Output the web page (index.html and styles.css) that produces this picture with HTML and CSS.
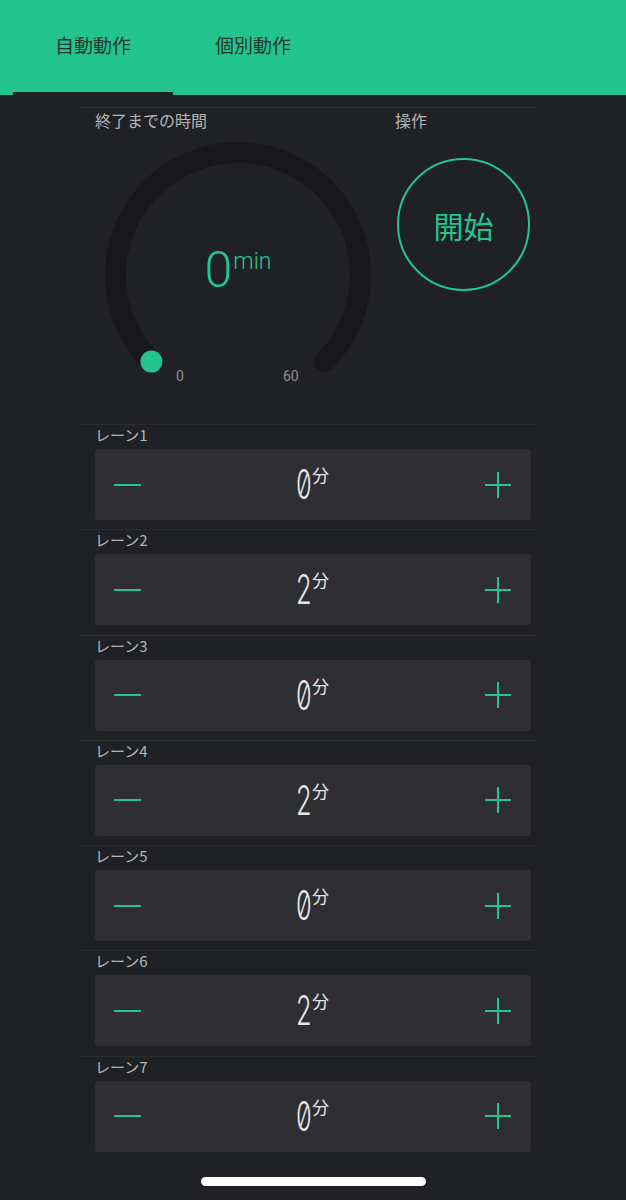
FILE: index.html
```html
<!DOCTYPE html>
<html lang="ja">
<head>
<meta charset="utf-8">
<link rel="stylesheet" href="styles.css">
</head>
<body>
<header class="header">
  <div class="tab active">自動動作</div>
  <div class="tab">個別動作</div>
</header>
<main class="main">
  <section class="section timer">
    <div class="left">
      <div class="label top-label">終了までの時間</div>
      <svg class="gauge" width="290" height="270" viewBox="0 0 290 270">
        <path d="M56.4 231.6 A122.5 122.5 0 1 1 229.6 231.6" fill="none" stroke="#18181b" stroke-width="21" stroke-linecap="round"/>
        <circle cx="56.4" cy="231.6" r="11" fill="#23c48e"/>
        <text x="81" y="251" class="tick">0</text>
        <text x="188" y="251" class="tick">60</text>
      </svg>
      <div class="readout"><span class="big">0</span><span class="min">min</span></div>
    </div>
    <div class="right">
      <div class="label top-label">操作</div>
      <div class="start">開始</div>
    </div>
  </section>

  <section class="section lane">
    <div class="label">レーン1</div>
    <div class="panel"><span class="minus"></span><div class="val"><span class="num">0</span><span class="unit">分</span></div><svg class="plus" width="26" height="26" viewBox="0 0 26 26"><path d="M13 0V26M0 13H26" stroke="#23c48e" stroke-width="2"/></svg></div>
  </section>
  <section class="section lane">
    <div class="label">レーン2</div>
    <div class="panel"><span class="minus"></span><div class="val"><span class="num">2</span><span class="unit">分</span></div><svg class="plus" width="26" height="26" viewBox="0 0 26 26"><path d="M13 0V26M0 13H26" stroke="#23c48e" stroke-width="2"/></svg></div>
  </section>
  <section class="section lane">
    <div class="label">レーン3</div>
    <div class="panel"><span class="minus"></span><div class="val"><span class="num">0</span><span class="unit">分</span></div><svg class="plus" width="26" height="26" viewBox="0 0 26 26"><path d="M13 0V26M0 13H26" stroke="#23c48e" stroke-width="2"/></svg></div>
  </section>
  <section class="section lane">
    <div class="label">レーン4</div>
    <div class="panel"><span class="minus"></span><div class="val"><span class="num">2</span><span class="unit">分</span></div><svg class="plus" width="26" height="26" viewBox="0 0 26 26"><path d="M13 0V26M0 13H26" stroke="#23c48e" stroke-width="2"/></svg></div>
  </section>
  <section class="section lane">
    <div class="label">レーン5</div>
    <div class="panel"><span class="minus"></span><div class="val"><span class="num">0</span><span class="unit">分</span></div><svg class="plus" width="26" height="26" viewBox="0 0 26 26"><path d="M13 0V26M0 13H26" stroke="#23c48e" stroke-width="2"/></svg></div>
  </section>
  <section class="section lane">
    <div class="label">レーン6</div>
    <div class="panel"><span class="minus"></span><div class="val"><span class="num">2</span><span class="unit">分</span></div><svg class="plus" width="26" height="26" viewBox="0 0 26 26"><path d="M13 0V26M0 13H26" stroke="#23c48e" stroke-width="2"/></svg></div>
  </section>
  <section class="section lane">
    <div class="label">レーン7</div>
    <div class="panel"><span class="minus"></span><div class="val"><span class="num">0</span><span class="unit">分</span></div><svg class="plus" width="26" height="26" viewBox="0 0 26 26"><path d="M13 0V26M0 13H26" stroke="#23c48e" stroke-width="2"/></svg></div>
  </section>
</main>
<div class="home"></div>
</body>
</html>
```
FILE: styles.css
```css
* { box-sizing: border-box; }
body {
  margin: 0;
  width: 626px;
  height: 1200px;
  overflow: hidden;
  position: relative;
  background: #202124;
  font-family: "Noto Sans CJK JP", "Noto Sans", sans-serif;
}
.header {
  height: 95px;
  background: #23c48e;
  display: flex;
  padding-left: 13px;
}
.tab {
  width: 160px;
  height: 95px;
  display: flex;
  justify-content: center;
  padding-top: 32px;
  font-size: 19px;
  line-height: 26px;
  color: #22352d;
  border-bottom: 3px solid transparent;
}
.tab.active { border-bottom-color: #202124; }
.main { padding: 12px 0 0 80px; }
.section {
  width: 456px;
  padding: 0 5px 0 15px;
  border-top: 1px solid #2b2c30;
}
.timer { height: 317px; display: flex; }
.left { width: 300px; position: relative; }
.label {
  font-size: 15px;
  line-height: 20px;
  color: #b4b4b4;
}
.top-label { padding-top: 2px; height: 22px; font-size: 16px; }
.gauge { display: block; }
.tick {
  font-family: Roboto, "Noto Sans", sans-serif;
  font-size: 14px;
  fill: #8e8e8e;
}
.readout {
  position: absolute;
  left: 0;
  top: 137px;
  width: 286px;
  display: flex;
  justify-content: center;
  align-items: flex-start;
  font-family: Roboto, "Noto Sans", sans-serif;
  color: #23c48e;
  font-weight: 300;
}
.big { font-size: 50px; line-height: 50px; }
.min { font-size: 23px; line-height: 23px; margin-top: 5px; margin-left: 1px; }
.right { flex: 1; }
.start {
  margin: 28px 0 0 2px;
  width: 133px;
  height: 133px;
  border-radius: 50%;
  border: 2px solid #23c48e;
  display: flex;
  align-items: center;
  justify-content: center;
  font-size: 30px;
  color: #23c48e;
}
.lane { padding-bottom: 9.3px; }
.panel {
  margin-top: 4px;
  height: 71px;
  background: #2f2f33;
  border-radius: 3px;
  display: grid;
  grid-template-columns: 1fr auto 1fr;
  align-items: center;
  padding: 0 20px 0 19px;
}
.minus {
  width: 27px;
  height: 2px;
  background: #23c48e;
}
.plus { justify-self: end; display: block; }
.val {
  display: flex;
  align-items: flex-start;
  color: #e6e6e6;
}
.num {
  display: inline-block;
  width: 15px;
  font-family: Inter, Roboto, sans-serif;
  font-weight: 300;
  font-feature-settings: "zero" 1;
  font-size: 41px;
  line-height: 41px;
  transform: scaleX(0.62);
  transform-origin: left center;
}
.unit {
  font-size: 17px;
  line-height: 17px;
  margin-top: 2px;
  margin-left: 1px;
}
.home {
  position: absolute;
  left: 201px;
  top: 1177px;
  width: 225px;
  height: 9px;
  border-radius: 5px;
  background: #ffffff;
}
```
